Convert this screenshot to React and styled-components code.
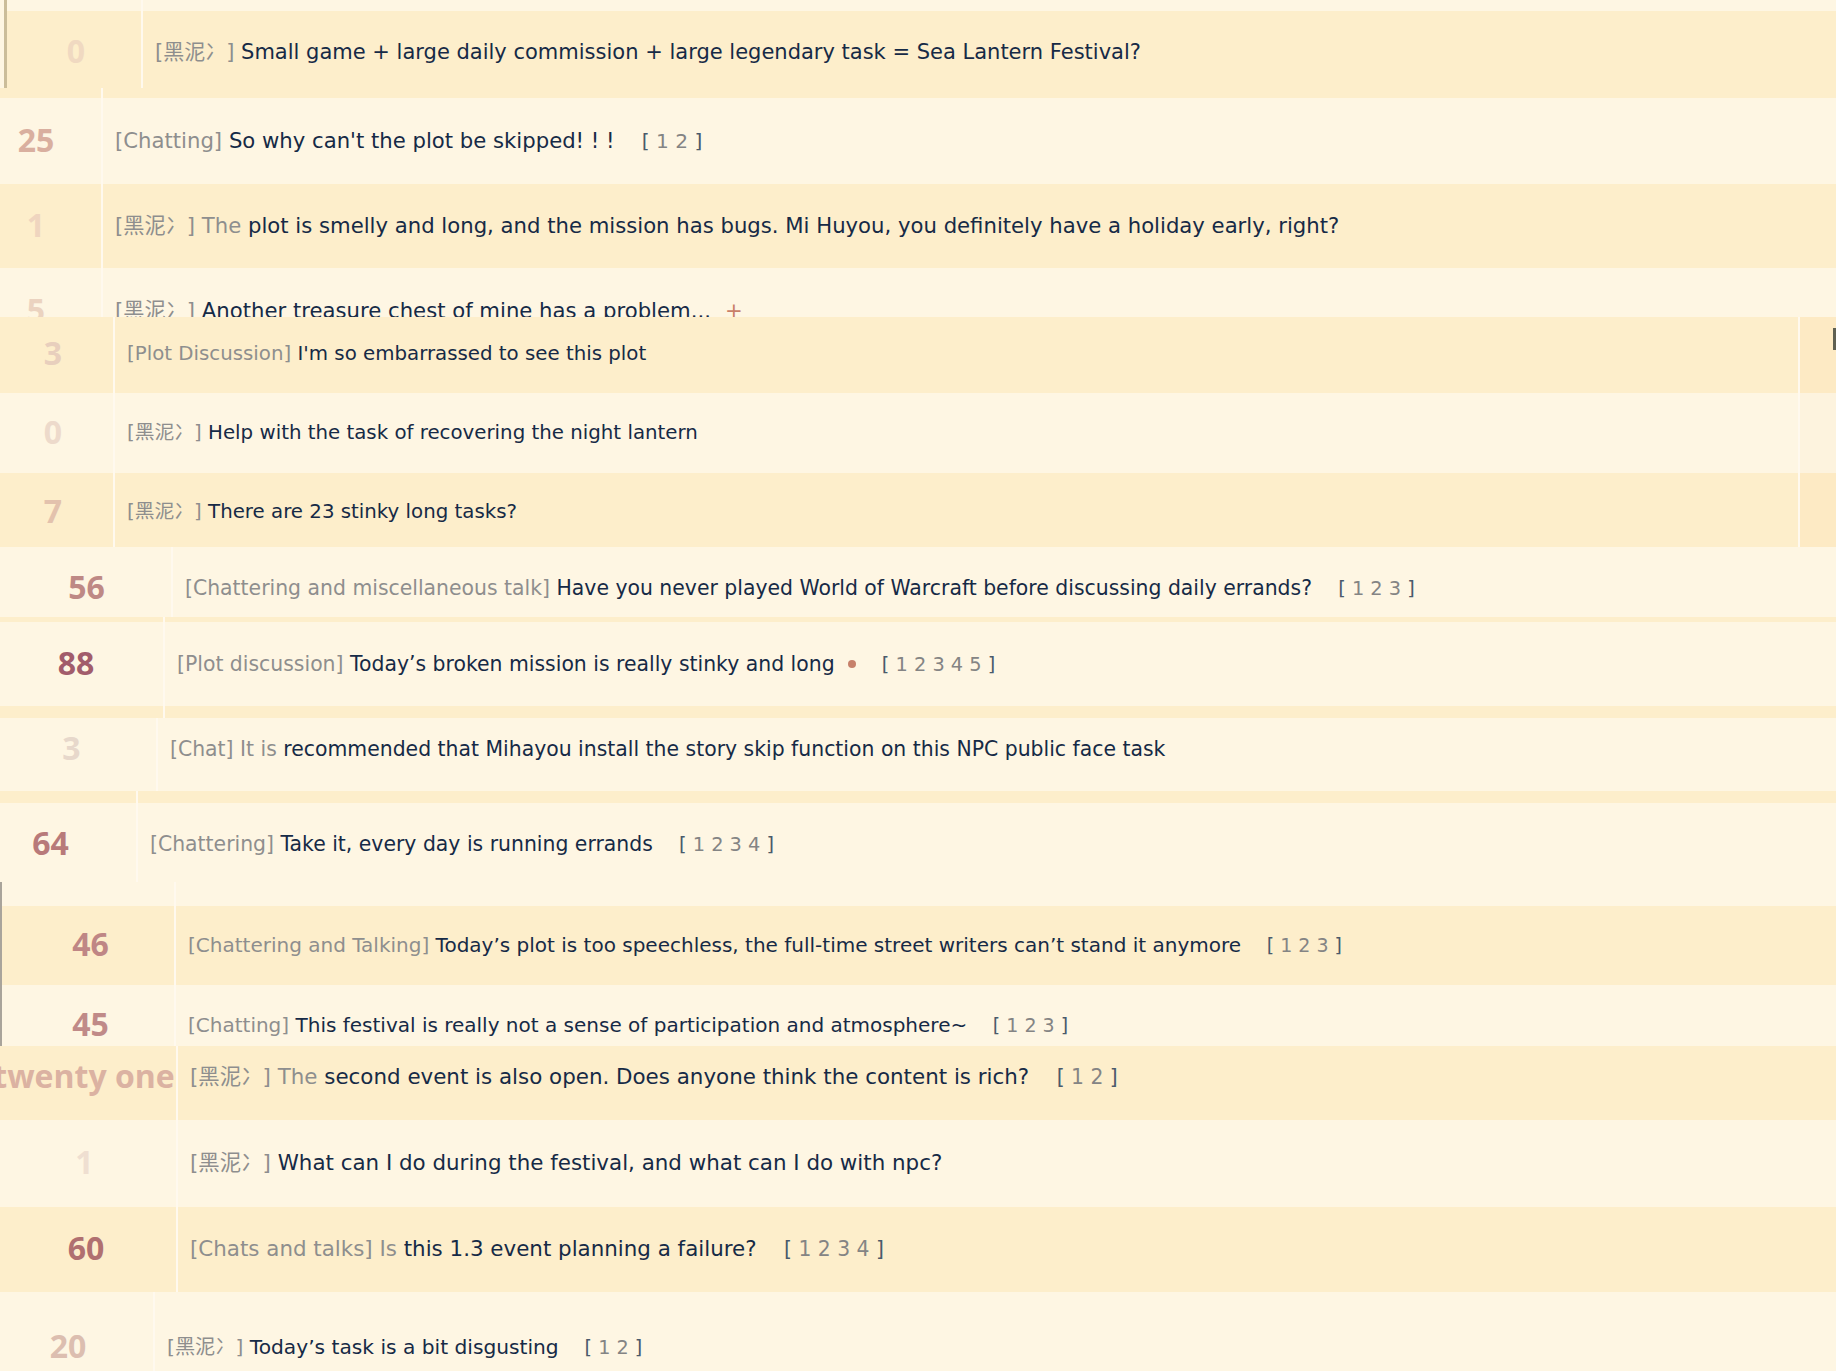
import React from 'react';
import styled, { createGlobalStyle } from 'styled-components';

const DARK = '#fdeecb';
const LIGHT = '#fef6e3';
const LINE = '#fff9ee';

const GlobalStyle = createGlobalStyle`
  html, body { margin: 0; padding: 0; background: ${LIGHT}; }
  body {
    width: 1836px; height: 1371px; overflow: hidden;
    font-family: "DejaVu Sans", "Noto Sans CJK SC", Verdana, sans-serif;
  }
`;

const Page = styled.main`
  display: flex;
  flex-direction: column;
  width: 1836px;
  height: 1371px;
  overflow: hidden;
  background: ${LIGHT};
`;

const Segment = styled.section`
  display: flex;
  flex-direction: column;
  flex-shrink: 0;
  margin-left: ${p => p.$inset || 0}px;
  border-left: ${p => (p.$edgeW ? `${p.$edgeW}px solid ${p.$edge}` : 'none')};
`;

const Row = styled.div`
  display: flex;
  flex-shrink: 0;
  height: ${p => p.$h}px;
  background: ${p => (p.$dark ? DARK : LIGHT)};
  overflow: hidden;
`;

const NumCell = styled.div`
  flex: 0 0 ${p => p.$w}px;
  min-width: 0;
  box-sizing: border-box;
  border-right: 2px solid ${LINE};
  display: flex;
  justify-content: center;
  padding-top: ${p => p.$top}px;
  padding-left: ${p => Math.max(0, 2 * p.$cx - (p.$w - 2))}px;
  padding-right: ${p => Math.max(0, p.$w - 2 - 2 * p.$cx)}px;
  font-family: "Open Sans", "Noto Sans", sans-serif;
  font-weight: 700;
  font-size: 32px;
  line-height: 36px;
  color: ${p => p.$color};
  white-space: nowrap;
`;

const TitleCell = styled.div`
  flex: 1;
  min-width: 0;
  padding: ${p => p.$top}px 0 0 12px;
  font-size: ${p => p.$fs}px;
  line-height: 24px;
  color: #162a46;
  white-space: nowrap;
`;

const SideCell = styled.div`
  flex: 0 0 38px;
  box-sizing: border-box;
  border-left: 2px solid ${LINE};
  background: ${p => (p.$dark ? '#fdeac4' : '#fdf3de')};
  display: flex;
  justify-content: flex-end;
  align-items: flex-start;
`;

const EdgeMark = styled.span`
  display: block;
  width: 3px;
  height: 22px;
  margin-top: 11px;
  background: #5f6052;
`;

const Cat = styled.span`
  color: #8e8e8e;
`;

const Muted = styled.span`
  color: #8e8e8e;
`;

const Pages = styled.span`
  margin-left: 1.35em;
  font-size: 0.95em;
  color: #848484;
  b { font-weight: 400; color: #4a5a6b; }
`;

const HotDot = styled.span`
  display: inline-block;
  width: 8px;
  height: 8px;
  margin-left: 13px;
  border-radius: 50%;
  background: #c7816b;
  vertical-align: 3px;
`;

const NewMark = styled.span`
  margin-left: 14px;
  color: #c97f68;
`;

const BLACK = '[黑泥冫]';

const segments = [
  {
    id: 's1', inset: 4, edgeW: 3, edge: '#cbbd9a', fs: 21,
    rows: [
      { h: 11, w: 136 },
      { h: 77, dark: true, w: 136, cx: 69, off: 41, num: '0', color: '#f0d9c1', cat: BLACK,
        title: 'Small game + large daily commission + large legendary task = Sea Lantern Festival?' },
    ],
  },
  {
    id: 's2', fs: 21.2,
    rows: [
      { h: 10, dark: true, w: 103 },
      { h: 86, w: 103, cx: 36, off: 42.5, num: '25', color: '#d9af9f', cat: '[Chatting]',
        title: "So why can't the plot be skipped! ! !", pages: 2 },
      { h: 84, dark: true, w: 103, cx: 36, off: 42, num: '1', color: '#efd5bf', cat: BLACK,
        muted: 'The', title: 'plot is smelly and long, and the mission has bugs. Mi Huyou, you definitely have a holiday early, right?' },
      { h: 49, w: 103, cx: 36, off: 42.5, num: '5', color: '#ebd3c0', cat: BLACK,
        title: 'Another treasure chest of mine has a problem...', plus: true },
    ],
  },
  {
    id: 's3', side: true, fs: 19.8,
    rows: [
      { h: 76, dark: true, w: 115, cx: 53, off: 36.6, num: '3', color: '#e8cfbd', cat: '[Plot Discussion]',
        title: "I'm so embarrassed to see this plot", mark: true },
      { h: 80, w: 115, cx: 53, off: 40, num: '0', color: '#eddacb', cat: BLACK,
        title: 'Help with the task of recovering the night lantern' },
      { h: 74, dark: true, w: 115, cx: 53, off: 38.7, num: '7', color: '#e3c2ad', cat: BLACK,
        title: 'There are 23 stinky long tasks?' },
    ],
  },
  {
    id: 's4', fs: 20.4,
    rows: [
      { h: 70, w: 173, cx: 86.5, off: 40.8, num: '56', color: '#be8985', cat: '[Chattering and miscellaneous talk]',
        title: 'Have you never played World of Warcraft before discussing daily errands?', pages: 3 },
      { h: 5, dark: true, w: 165 },
      { h: 84, w: 165, cx: 76, off: 42, num: '88', color: '#a25c6b', cat: '[Plot discussion]',
        title: 'Today\u2019s broken mission is really stinky and long', dot: true, pages: 5 },
      { h: 12, dark: true, w: 165 },
      { h: 73, w: 158, cx: 71.5, off: 31, num: '3', color: '#e7d8cb', cat: '[Chat]',
        muted: 'It is', title: 'recommended that Mihayou install the story skip function on this NPC public face task' },
      { h: 12, dark: true, w: 138 },
      { h: 79, w: 138, cx: 50.5, off: 41, num: '64', color: '#b87a7a', cat: '[Chattering]',
        title: 'Take it, every day is running errands', pages: 4 },
    ],
  },
  {
    id: 's5', edgeW: 2, edge: '#a9a49b', fs: 20,
    rows: [
      { h: 24, w: 174 },
      { h: 79, dark: true, w: 174, cx: 88.5, off: 39, num: '46', color: '#bf8685', cat: '[Chattering and Talking]',
        title: 'Today\u2019s plot is too speechless, the full-time street writers can\u2019t stand it anymore', pages: 3 },
      { h: 61, w: 174, cx: 88.5, off: 39.5, num: '45', color: '#c08a88', cat: '[Chatting]',
        title: 'This festival is really not a sense of participation and atmosphere~', pages: 3 },
    ],
  },
  {
    id: 's6', fs: 21.4,
    rows: [
      { h: 74, dark: true, w: 178, cx: 84, off: 31, num: 'twenty one', color: '#dbb2a2', cat: BLACK,
        muted: 'The', title: 'second event is also open. Does anyone think the content is rich?', pages: 2 },
      { h: 87, w: 178, cx: 84.5, off: 43, num: '1', color: '#efdfd1', cat: BLACK,
        title: 'What can I do during the festival, and what can I do with npc?' },
      { h: 85, dark: true, w: 178, cx: 86, off: 42, num: '60', color: '#b07070', cat: '[Chats and talks]',
        muted: 'Is', title: 'this 1.3 event planning a failure?', pages: 4 },
    ],
  },
  {
    id: 's7', fs: 20.2,
    rows: [
      { h: 79, w: 155, cx: 68, off: 54.5, num: '20', color: '#dcbeb0', cat: BLACK,
        title: 'Today\u2019s task is a bit disgusting', pages: 2 },
    ],
  },
];

function PageLinks({ count }) {
  const nums = Array.from({ length: count }, (_, i) => i + 1).join(' ');
  return (
    <Pages>
      <b>[</b> {nums} <b>]</b>
    </Pages>
  );
}

function TopicRow({ row, side, fs }) {
  const hasContent = row.num !== undefined;
  return (
    <Row $h={row.h} $dark={row.dark}>
      <NumCell $w={row.w} $cx={row.cx || row.w / 2} $top={hasContent ? row.off - 19 : 0} $color={row.color}>
        {row.num}
      </NumCell>
      <TitleCell $fs={fs} $top={hasContent ? row.off - 11.6 : 0}>
        {hasContent && (
          <>
            <Cat>{row.cat}</Cat>{' '}
            {row.muted && <><Muted>{row.muted}</Muted>{' '}</>}
            {row.title}
            {row.dot && <HotDot />}
            {row.plus && <NewMark>+</NewMark>}
            {row.pages && <PageLinks count={row.pages} />}
          </>
        )}
      </TitleCell>
      {side && <SideCell $dark={row.dark}>{row.mark && <EdgeMark />}</SideCell>}
    </Row>
  );
}

export default function App() {
  return (
    <>
      <GlobalStyle />
      <Page>
        {segments.map(seg => (
          <Segment key={seg.id} $inset={seg.inset} $edgeW={seg.edgeW} $edge={seg.edge}>
            {seg.rows.map((row, i) => (
              <TopicRow key={i} row={row} side={seg.side} fs={seg.fs} />
            ))}
          </Segment>
        ))}
      </Page>
    </>
  );
}
